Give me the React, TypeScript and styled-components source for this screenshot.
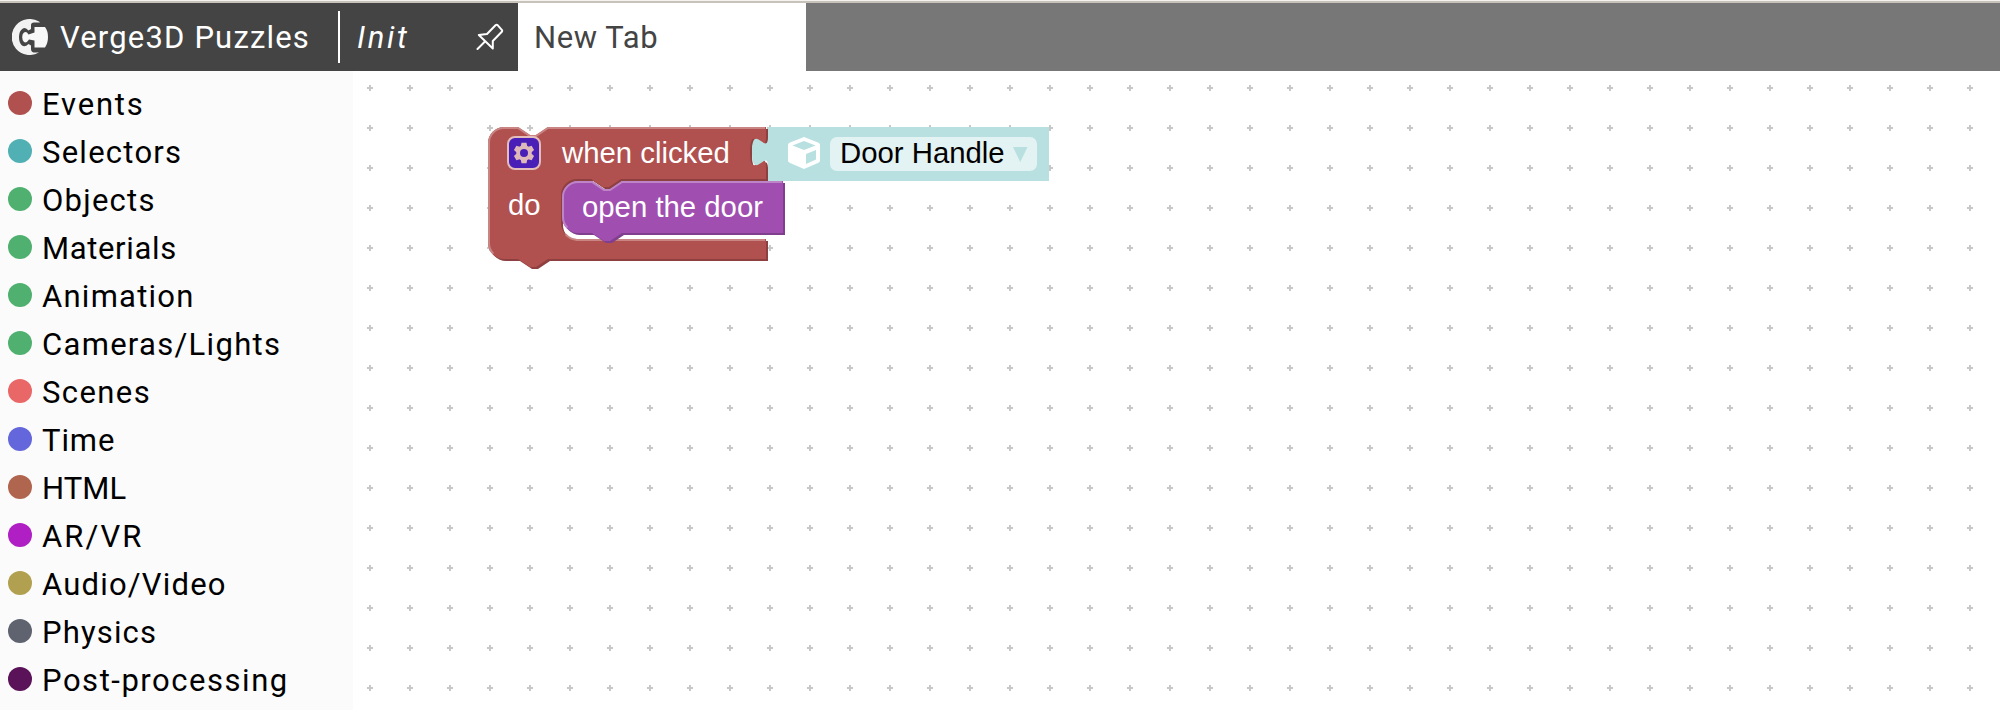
import React from 'react';
import styled, { createGlobalStyle } from 'styled-components';

const GlobalStyle = createGlobalStyle`
  * { box-sizing: border-box; }
  body { margin: 0; overflow: hidden; background: #fff; font-family: Roboto, sans-serif; }
`;

const Page = styled.div`
  width: 2000px;
  height: 710px;
  display: flex;
  flex-direction: column;
  overflow: hidden;
  border-top: 1px solid #f5f3ef;
`;

const TopBar = styled.header`
  flex: none;
  height: 70px;
  display: flex;
  border-top: 2px solid #c8c3ba;
  background: #777;
  font-size: 31px;
  line-height: 68px;
  color: #fff;
  white-space: nowrap;
`;

const Brand = styled.div`
  width: 338px;
  display: flex;
  align-items: center;
  padding-left: 12px;
  background: #444;
`;

const BrandName = styled.span`
  margin-left: 12px;
  padding-top: 1px;
  letter-spacing: 1.17px;
`;

const DividerCell = styled.div`
  background: #444;
`;

const Divider = styled.div`
  width: 2px;
  height: 52px;
  margin-top: 8px;
  background: #fff;
`;

const InitTab = styled.div`
  width: 178px;
  display: flex;
  align-items: center;
  justify-content: space-between;
  padding: 0 14px 0 17px;
  background: #444;
  font-style: italic;
`;

const InitName = styled.span`
  padding-top: 1px;
  letter-spacing: 2.6px;
`;

const ActiveTab = styled.div`
  width: 288px;
  padding: 1px 0 0 16px;
  background: #fff;
  color: #444;
  letter-spacing: 0.6px;
`;

const Body = styled.main`
  flex: 1;
  min-height: 0;
  display: flex;
`;

const Toolbox = styled.nav`
  width: 353px;
  padding-top: 8px;
  background: #fbfbfb;
`;

const CategoryRow = styled.div`
  height: 48px;
  display: flex;
  align-items: center;
  padding-left: 8px;
`;

const Dot = styled.i<{ $color: string }>`
  width: 24px;
  height: 24px;
  border-radius: 50%;
  background: ${(p) => p.$color};
`;

const CategoryName = styled.span<{ $spacing: number }>`
  margin-left: 10px;
  padding-top: 3px;
  font-size: 31px;
  line-height: 45px;
  color: #000;
  white-space: nowrap;
  letter-spacing: ${(p) => p.$spacing}px;
`;

const Workspace = styled.section`
  position: relative;
  flex: 1;
  overflow: hidden;
  background: #fff;
`;

const GridLayer = styled.svg`
  display: block;
  width: 100%;
  height: 100%;
`;

const Block = styled.div<{ $x: number; $y: number; $w: number; $h: number }>`
  position: absolute;
  left: ${(p) => p.$x}px;
  top: ${(p) => p.$y}px;
  width: ${(p) => p.$w}px;
  height: ${(p) => p.$h}px;
  color: #fff;
  font: 29.33px/52px 'Liberation Sans', sans-serif;
  white-space: nowrap;
`;

const Shape = styled.svg`
  position: absolute;
  inset: 0;
  width: 100%;
  height: 100%;
  overflow: visible;
`;

const BlockRow = styled.div<{ $pad: number; $height?: number }>`
  position: relative;
  height: ${(p) => p.$height ?? 52}px;
  display: flex;
  align-items: center;
  padding-left: ${(p) => p.$pad}px;
`;

const BlockLabel = styled.span<{ $gap?: number }>`
  margin-left: ${(p) => p.$gap ?? 0}px;
`;

const Dropdown = styled.div`
  width: 207px;
  height: 34px;
  margin: 2px 0 0 10px;
  padding: 0 9px 0 10px;
  display: flex;
  align-items: center;
  justify-content: space-between;
  border-radius: 7px;
  background: #e3f2f2;
  color: #000;
  line-height: 32px;
`;

const DropdownValue = styled.span`
  height: 34px;
`;

const categories: [string, string, number][] = [
  ['Events', '#b0504f', 1.8],
  ['Selectors', '#50b0b3', 1.25],
  ['Objects', '#50b070', 1.25],
  ['Materials', '#50b070', 0.65],
  ['Animation', '#50b070', 1.25],
  ['Cameras/Lights', '#50b070', 1.3],
  ['Scenes', '#e96767', 1.4],
  ['Time', '#6467db', 0.9],
  ['HTML', '#b0654f', 0.1],
  ['AR/VR', '#b01fc4', 2.1],
  ['Audio/Video', '#b0a04f', 1.2],
  ['Physics', '#5f6370', 1.15],
  ['Post-processing', '#5a1258', 1.53],
];

const eventPath =
  'M0,8 A8,8 0 0,1 8,0 H15 l6,4 3,0 6,-4 H139 v5 c0,10 -8,-8 -8,7.5 s8,-2.5 8,7.5 V26 H66.5 l-6,4 -3,0 -6,-4 h-7 a8,8 0 0,0 -8,8 v14 a8,8 0 0,0 8,8 H139 V66 H30 l-6,4 -3,0 -6,-4 H8 a8,8 0 0,1 -8,-8 z';
const procedurePath =
  'M0,8 A8,8 0 0,1 8,0 H15 l6,4 3,0 6,-4 H110.5 V26 H30 l-6,4 -3,0 -6,-4 H8 a8,8 0 0,1 -8,-8 z';

function Logo() {
  return (
    <svg width="36" height="36" viewBox="0 0 36 36">
      <path
        d="M27 2.600A18 18 0 1 0 27 33.400H21.500Q19 33 19 30V26.500L16.500 25Q13 28.500 10 26.500Q7 24 7 18T10.500 9.700Q13.500 7.500 16.500 11.500L19 10V6Q19 3.500 22 3.500H28z"
        fill="#f2f2f2"
      />
      <path d="M22.500 8H33Q36 12 36 18T33 28.500H22.500V21.500L17 20.500Q14.500 24.500 12 23Q10.200 21.500 10.200 18T12 13.500Q14.500 12 16.500 15.500L22.500 13.500z" fill="#f8f8f8" />
    </svg>
  );
}

function PinIcon() {
  return (
    <svg width="28" height="28" viewBox="0 0 28 28" fill="none" stroke="#fff" strokeWidth="2" strokeLinejoin="round" strokeLinecap="round">
      <path d="M1.500 26 8.500 19M2.800 12 16.800 25.500 16.800 18 25.800 8.800Q26.600 7.800 25.800 6.800L21.800 2.300Q20.600 1.200 19.500 2.300L11 11z" />
    </svg>
  );
}

function GearIcon() {
  return (
    <svg width="34" height="34" viewBox="0 0 34 34">
      <rect x="1" y="1" width="32" height="32" rx="7" fill="#4a1fb8" stroke="#e3bcbc" strokeWidth="2" />
      <g fill="#dfb9b9">
        {[0, 60, 120].map((a) => (
          <path key={a} transform={`rotate(${a} 17 17)`} d="M14.500 6.800h5l1 5h-7zM14.500 27.200h5l1-5h-7z" />
        ))}
        <circle cx="17" cy="17" r="7.700" />
      </g>
      <circle cx="17" cy="17" r="4" fill="#4a1fb8" />
    </svg>
  );
}

function CubeIcon() {
  return (
    <svg width="32" height="32" viewBox="0 0 32 32">
      <path d="M16 0 30 5.500Q32 6.300 32 8V23.500Q32 25 30.500 25.800L16 32 1.500 25.800Q0 25 0 23.500V8Q0 6.300 2 5.500z" fill="#fff" />
      <path d="M16 4 27.500 8.500 16 13 4.500 8.500zM18 17 28 13V22.500L18 27z" fill="#b8e0e0" />
    </svg>
  );
}

export default function App() {
  return (
    <Page>
      <GlobalStyle />
      <TopBar>
        <Brand>
          <Logo />
          <BrandName>Verge3D Puzzles</BrandName>
        </Brand>
        <DividerCell>
          <Divider />
        </DividerCell>
        <InitTab>
          <InitName>Init</InitName>
          <PinIcon />
        </InitTab>
        <ActiveTab>New Tab</ActiveTab>
      </TopBar>
      <Body>
        <Toolbox>
          {categories.map(([name, color, spacing]) => (
            <CategoryRow key={name}>
              <Dot $color={color} />
              <CategoryName $spacing={spacing}>{name}</CategoryName>
            </CategoryRow>
          ))}
        </Toolbox>
        <Workspace>
          <GridLayer>
            <defs>
              <pattern id="grid" x="-3" y="-3" width="40" height="40" patternUnits="userSpaceOnUse">
                <path d="M17 20h6M20 17v6" stroke="#c8c8c8" strokeWidth="2" />
              </pattern>
            </defs>
            <rect width="100%" height="100%" fill="url(#grid)" />
          </GridLayer>
          <Block $x={135} $y={56} $w={278} $h={132}>
            <Shape>
              <g transform="scale(2)">
                <path d={eventPath} fill="#8d403f" transform="translate(1 1)" />
                <path d={eventPath} fill="#b0504f" />
                <path
                  d="M2.700,63.300 A7.500,7.500 0 0,1 .5,58 V8 A7.500,7.500 0 0,1 8,.5 H15 l6,4 3,0 6,-4 H138.500 M38.800,53.700 A8.500,8.500 0 0,0 44.500,56.500 H138.500"
                  fill="none"
                  stroke="#c88584"
                />
              </g>
            </Shape>
            <BlockRow $pad={19}>
              <GearIcon />
              <BlockLabel $gap={21}>when clicked</BlockLabel>
            </BlockRow>
            <BlockRow $pad={20}>
              <BlockLabel>do</BlockLabel>
            </BlockRow>
          </Block>
          <Block $x={415} $y={56} $w={281} $h={54}>
            <Shape>
              <path d="M0,0 H281 V54 H0 V40 c0,-20 -16,16 -16,-15 s16,5 16,-15 z" fill="#b8e0e0" />
            </Shape>
            <BlockRow $pad={20}>
              <CubeIcon />
              <Dropdown>
                <DropdownValue>Door Handle</DropdownValue>
                <svg width="15" height="15" viewBox="0 0 15 15">
                  <path d="M0 0h14.500L7.250 15z" fill="#b8e0e0" />
                </svg>
              </Dropdown>
            </BlockRow>
          </Block>
          <Block $x={209} $y={110} $w={221} $h={52}>
            <Shape>
              <g transform="scale(2)">
                <path d={procedurePath} fill="#803f8d" transform="translate(1 1)" />
                <path d={procedurePath} fill="#a04fb0" />
                <path
                  d="M2.700,23.300 A7.500,7.500 0 0,1 .5,18 V8 A7.500,7.500 0 0,1 8,.5 H15 l6,4 3,0 6,-4 H110"
                  fill="none"
                  stroke="#bd84c8"
                />
              </g>
            </Shape>
            <BlockRow $pad={20}>
              <BlockLabel>open the door</BlockLabel>
            </BlockRow>
          </Block>
        </Workspace>
      </Body>
    </Page>
  );
}
